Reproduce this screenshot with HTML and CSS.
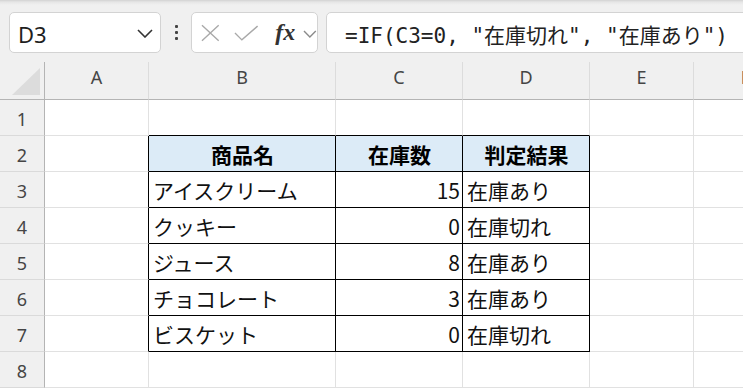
FILE: index.html
```html
<!DOCTYPE html>
<html lang="ja">
<head>
<meta charset="utf-8">
<title>Excel</title>
<link rel="stylesheet" href="styles.css">
</head>
<body>
<div class="topbar">
  <div class="namebox">
    <span class="cellref">D3</span>
    <svg class="nb-chev" width="16" height="9" viewBox="0 0 16 9"><polyline points="1,1 8,8 15,1" fill="none" stroke="#333" stroke-width="1.6"/></svg>
  </div>
  <div class="dots"><i></i><i></i><i></i></div>
  <div class="fxbox">
    <svg class="ic-x" width="19" height="18" viewBox="0 0 19 18"><path d="M1 1 L18 17 M18 1 L1 17" stroke="#a9a9a9" stroke-width="1.4" fill="none"/></svg>
    <svg class="ic-check" width="25" height="16" viewBox="0 0 25 16"><polyline points="1,8 8,15 24,1" fill="none" stroke="#a9a9a9" stroke-width="1.4"/></svg>
    <span class="fx">fx</span>
    <svg class="ic-chev" width="14" height="8" viewBox="0 0 14 8"><polyline points="1,1 7,7 13,1" fill="none" stroke="#8a8a8a" stroke-width="1.4"/></svg>
  </div>
  <div class="formula">=IF(C3=0, "在庫切れ", "在庫あり")</div>
</div>

<div class="sheet">
  <div class="corner"><svg width="29" height="28" viewBox="0 0 29 28"><polygon points="28,0 28,27 0,27" fill="#dcdcdc"/></svg></div>
  <div class="ch">A</div><div class="ch">B</div><div class="ch">C</div><div class="ch">D</div><div class="ch">E</div><div class="ch">F</div>

  <div class="rh">1</div>
  <div class="c"></div><div class="c tb"></div><div class="c tb"></div><div class="c tb"></div><div class="c"></div><div class="c"></div>

  <div class="rh">2</div>
  <div class="c tr"></div><div class="c t hd">商品名</div><div class="c t hd">在庫数</div><div class="c t hd">判定結果</div><div class="c"></div><div class="c"></div>

  <div class="rh">3</div>
  <div class="c tr"></div><div class="c t">アイスクリーム</div><div class="c t num">15</div><div class="c t">在庫あり</div><div class="c"></div><div class="c"></div>

  <div class="rh">4</div>
  <div class="c tr"></div><div class="c t">クッキー</div><div class="c t num">0</div><div class="c t">在庫切れ</div><div class="c"></div><div class="c"></div>

  <div class="rh">5</div>
  <div class="c tr"></div><div class="c t">ジュース</div><div class="c t num">8</div><div class="c t">在庫あり</div><div class="c"></div><div class="c"></div>

  <div class="rh">6</div>
  <div class="c tr"></div><div class="c t">チョコレート</div><div class="c t num">3</div><div class="c t">在庫あり</div><div class="c"></div><div class="c"></div>

  <div class="rh">7</div>
  <div class="c tr"></div><div class="c t">ビスケット</div><div class="c t num">0</div><div class="c t">在庫切れ</div><div class="c"></div><div class="c"></div>

  <div class="rh">8</div>
  <div class="c"></div><div class="c"></div><div class="c"></div><div class="c"></div><div class="c"></div><div class="c"></div>
</div>
</body>
</html>
```

FILE: styles.css
```css
* { box-sizing: border-box; }
html, body {
  margin: 0;
  padding: 0;
}
body {
  width: 743px;
  height: 388px;
  overflow: hidden;
  background: #ffffff;
  font-family: "Noto Sans", "Noto Sans CJK JP", sans-serif;
}

.topbar {
  height: 62px;
  background: linear-gradient(to bottom, #d2d2d2 0px, #e6e6e6 2px, #f0f0f0 5px, #f0f0f0 100%);
  display: flex;
  align-items: flex-start;
  padding: 12px 0 0 9px;
}

.namebox {
  width: 152px;
  height: 41px;
  background: #fff;
  border: 1px solid #d3d3d3;
  border-radius: 5px;
  display: flex;
  align-items: center;
  justify-content: space-between;
  padding: 3px 7px 0 8px;
}
.cellref {
  font-family: "Noto Sans", sans-serif;
  font-size: 22px;
  color: #1f1f1f;
  line-height: 1;
}
.nb-chev { margin-top: -2px; }

.dots {
  width: 30px;
  height: 41px;
  display: flex;
  flex-direction: column;
  align-items: center;
  justify-content: center;
  gap: 3px;
}
.dots i {
  display: block;
  width: 3px;
  height: 3px;
  border-radius: 1px;
  background: #444;
}

.fxbox {
  width: 127px;
  height: 41px;
  background: #fff;
  border: 1px solid #d3d3d3;
  border-radius: 5px;
  display: flex;
  align-items: center;
  padding-left: 9px;
}
.ic-x { margin-top: 1px; }
.ic-check { margin-left: 14px; margin-top: 1px; }
.fx {
  font-family: "Liberation Serif", serif;
  font-style: italic;
  font-weight: bold;
  font-size: 24px;
  color: #333;
  margin-left: 17px;
  line-height: 1;
  margin-top: -2px;
}
.ic-chev { margin-left: 8px; margin-top: 2px; }

.formula {
  flex: 1;
  height: 41px;
  margin-left: 8px;
  margin-right: -12px;
  background: #fff;
  border: 1px solid #d3d3d3;
  border-radius: 5px;
  display: flex;
  align-items: center;
  padding: 2px 0 0 18px;
  font-family: "DejaVu Sans Mono", "Noto Sans CJK JP", monospace;
  font-size: 21px;
  color: #222;
  white-space: pre;
}

.sheet {
  display: grid;
  grid-template-columns: 45px 104px 187px 127px 127px 104px 104px;
  grid-template-rows: 38px repeat(8, 36px);
}

.corner {
  background: #f0f0f0;
  border-right: 1px solid #b4b4b4;
  border-bottom: 1px solid #b4b4b4;
  display: flex;
  align-items: flex-end;
  justify-content: flex-end;
  padding: 0 3px 3px 0;
}
.ch {
  background: #f0f0f0;
  border-right: 1px solid #dcdcdc;
  border-bottom: 1px solid #b4b4b4;
  display: flex;
  align-items: center;
  justify-content: center;
  padding-bottom: 8px;
  font-size: 18px;
  color: #454545;
}
.rh {
  background: #f0f0f0;
  border-right: 1px solid #b4b4b4;
  border-bottom: 1px solid #dadada;
  display: flex;
  align-items: center;
  justify-content: center;
  padding-top: 3px;
  font-size: 18px;
  color: #454545;
}

.c {
  border-right: 1px solid #e1e1e1;
  border-bottom: 1px solid #e1e1e1;
  display: flex;
  align-items: center;
  padding: 1px 3px 0 4px;
  font-family: "Noto Sans CJK JP", sans-serif;
  font-size: 21px;
  color: #111;
  white-space: nowrap;
  overflow: hidden;
}
.c.tb { border-bottom-color: #000; }
.c.tr { border-right-color: #000; }
.c.t {
  border-right-color: #000;
  border-bottom-color: #000;
}
.c.hd {
  background: #dcebf7;
  font-weight: bold;
  justify-content: center;
  color: #000;
}
.c.num {
  justify-content: flex-end;
  padding-right: 2px;
}
```
